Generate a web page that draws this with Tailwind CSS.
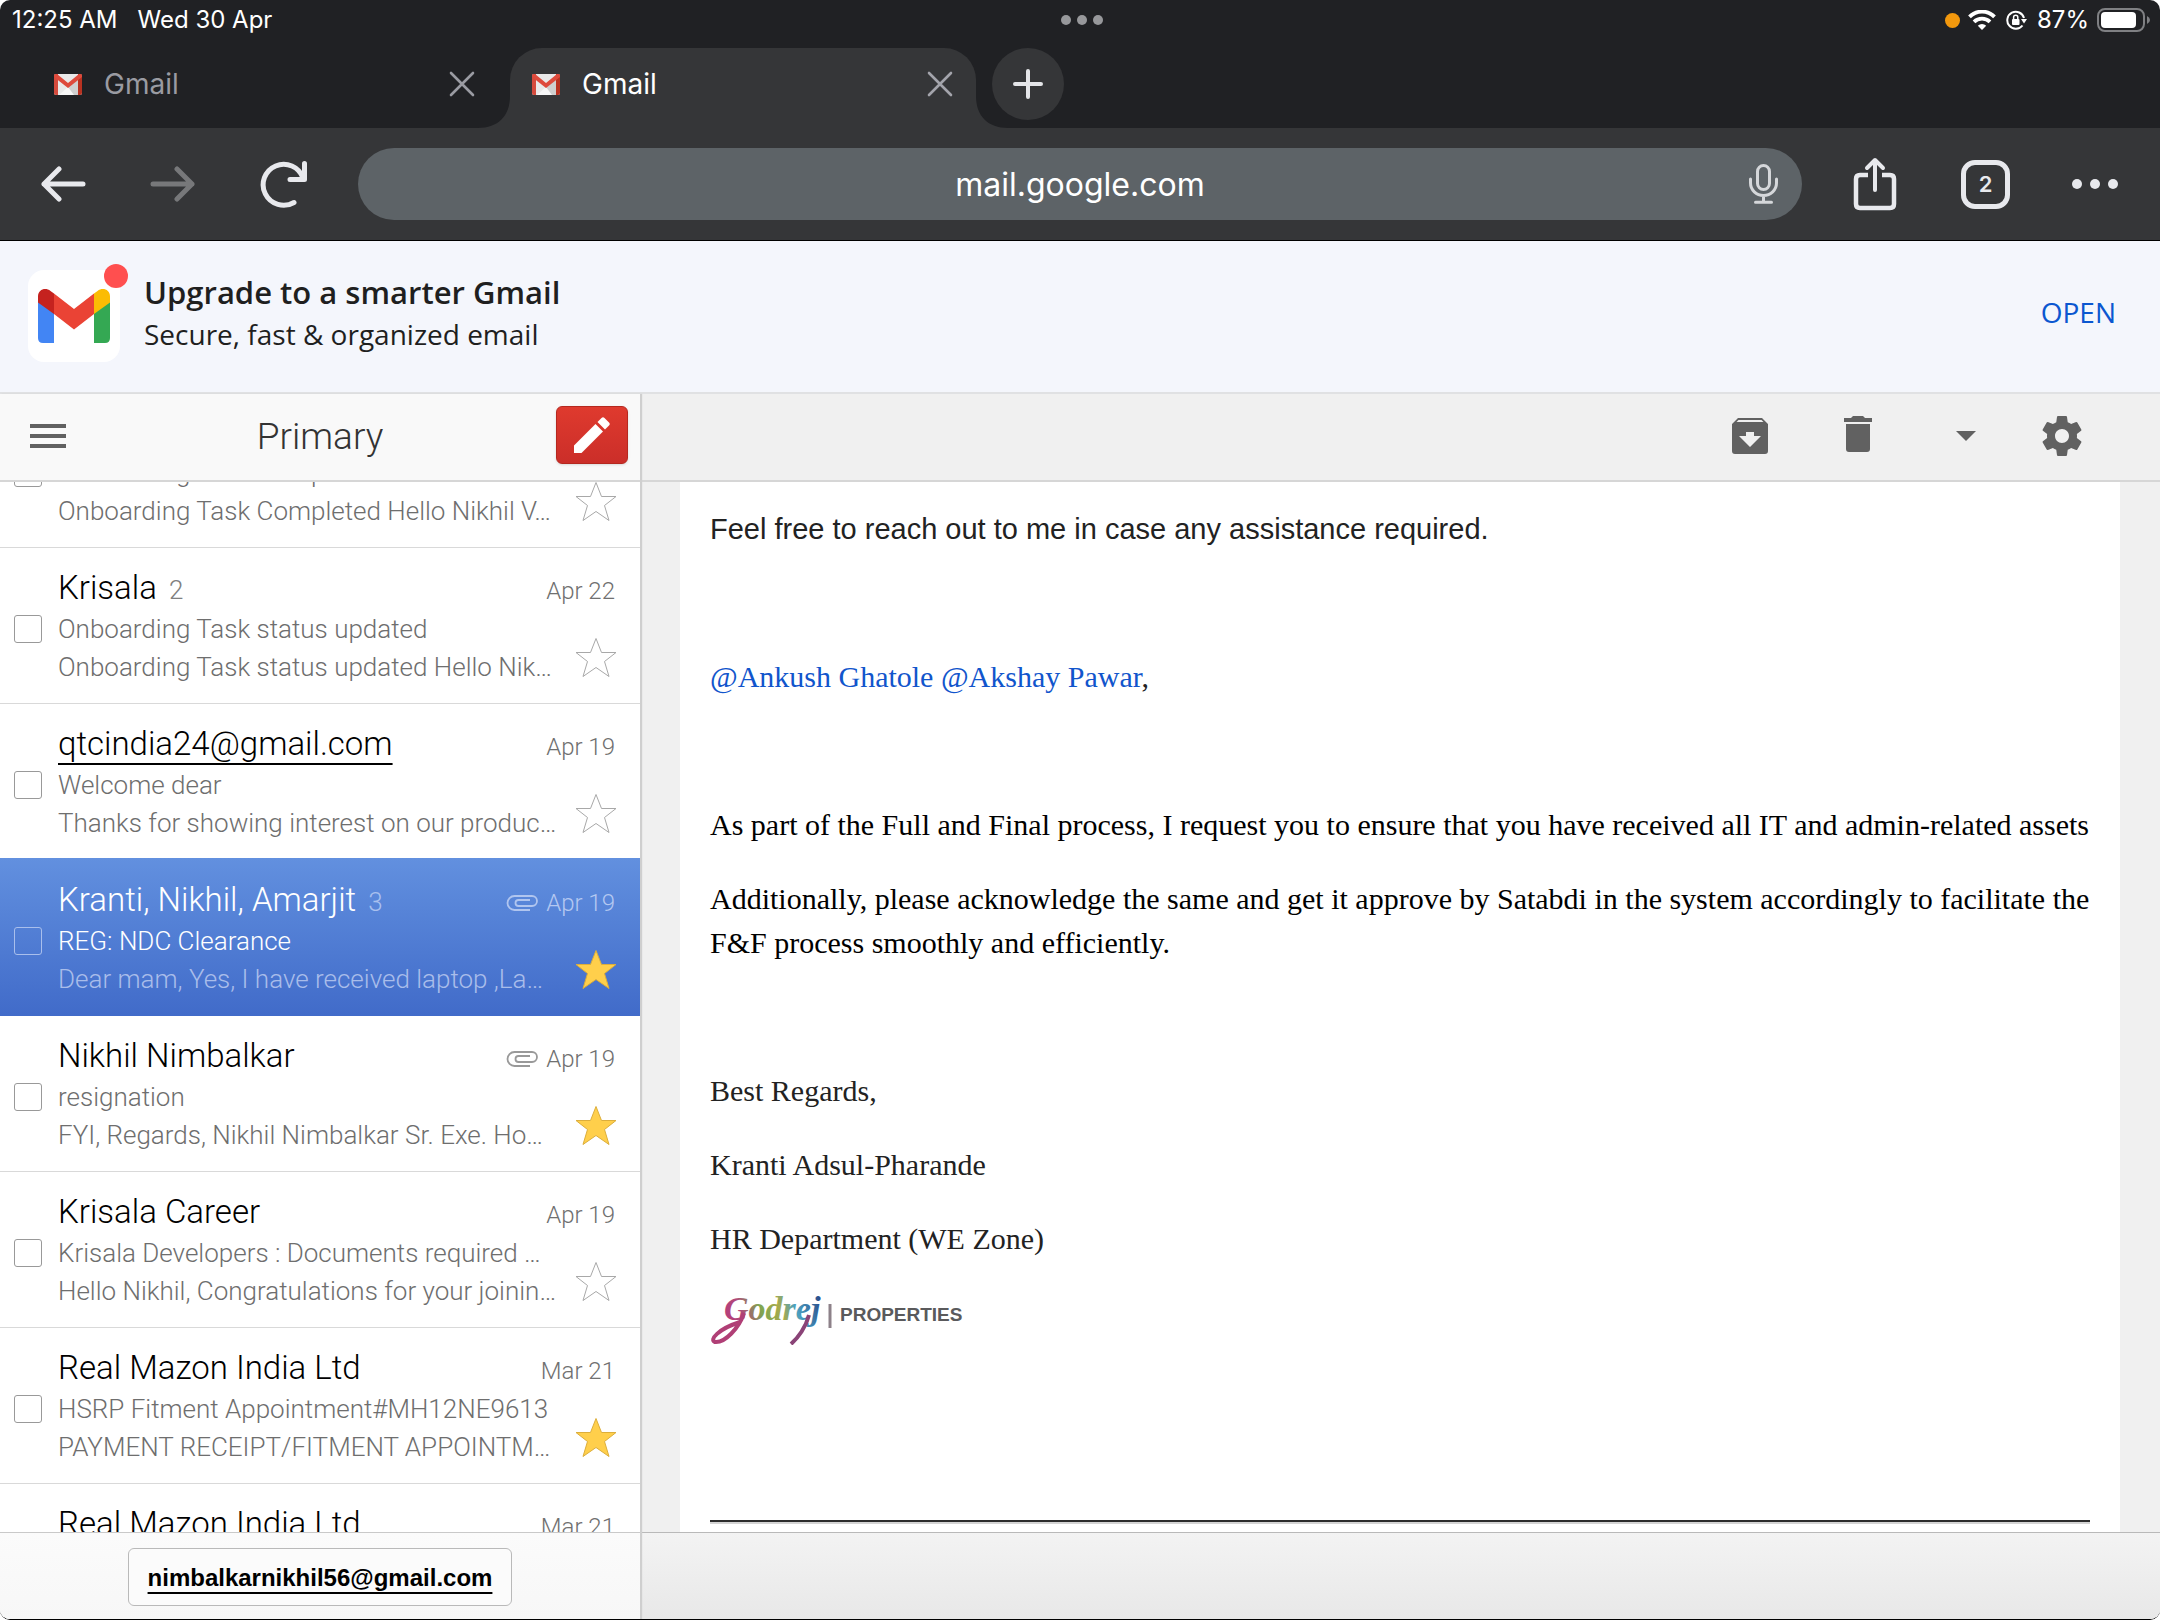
<!DOCTYPE html>
<html lang="en">
<head>
<meta charset="utf-8">
<meta name="viewport" content="width=device-width, initial-scale=1">
<title>Gmail</title>
<script src="https://cdn.jsdelivr.net/npm/@tailwindcss/browser@4"></script>
</head>
<body class="bg-white">
<svg class="hidden" aria-hidden="true">
  <defs>
    <symbol id="favicon" viewBox="0 0 28 21">
      <rect width="28" height="21" rx="2" fill="#e9e9e9"/>
      <path d="M5 21 14 13l9 8z" fill="#f7f7f7"/>
      <path d="M14 13 24 3v18h-4z" fill="#cfcfcf"/>
      <path d="M0 2Q0 0 2 0h2v21H2q-2 0-2-2z" fill="#d54b3d"/>
      <path d="M28 2q0-2-2-2h-2v21h2q2 0 2-2z" fill="#b93221"/>
      <path d="M0 2Q0 0 2 0h1l11 9L25 0h1q2 0 2 2v1L14 14 0 3z" fill="#de4a3c"/>
    </symbol>
    <symbol id="close" viewBox="0 0 26 26">
      <path d="M2 2l22 22M24 2 2 24" fill="none" stroke="currentColor" stroke-width="2.6" stroke-linecap="round"/>
    </symbol>
    <symbol id="flare" viewBox="0 0 32 32">
      <path d="M32 0v32H0C20 32 32 20 32 0z" fill="#353638"/>
    </symbol>
    <symbol id="clip" viewBox="0 0 32 16">
      <path d="M24 15H8.500a7 7 0 0 1 0-14H26a5 5 0 0 1 0 10H12.500a3 3 0 0 1 0-6H24" fill="none" stroke="currentColor" stroke-width="1.800"/>
    </symbol>
    <symbol id="star" viewBox="0 0 42 41">
      <path d="M21 1.500 26.500 15.500 41 15.500 29.500 24.500 34 39.500 21 30.500 8 39.500 12.500 24.500 1 15.500 15.500 15.500z" stroke-width="1" stroke-miterlimit="10"/>
    </symbol>
  </defs>
</svg>
<div class="flex h-screen flex-col overflow-hidden rounded-[10px] border-b border-black bg-white">

  <header class="shrink-0 border-b border-black bg-[#202124] font-[Inter,sans-serif] text-white">
    <div class="flex h-12 items-center pr-[9px] pb-4 pl-3 pt-2 text-[24px] leading-6">
      <div class="flex flex-1 gap-5"><span>12:25 AM</span><span>Wed 30 Apr</span></div>
      <div class="flex gap-[6px]" aria-hidden="true">
        <span class="size-[10px] rounded-full bg-[#97989b]"></span><span class="size-[10px] rounded-full bg-[#97989b]"></span><span class="size-[10px] rounded-full bg-[#97989b]"></span>
      </div>
      <div class="flex flex-1 items-center justify-end">
        <span class="mr-2 size-[15px] rounded-full bg-[#f2980d]"></span>
        <svg class="mr-[10px] h-5 w-7" viewBox="0 0 28 20" fill="none" stroke="#fff" stroke-width="3.800"><path d="M1.500 6.800a17.500 17.500 0 0 1 25 0"/><path d="M6 11.800a11.500 11.500 0 0 1 16 0"/><path d="M14 20 9.800 15.800a6 6 0 0 1 8.400 0z" fill="#fff" stroke="none"/></svg>
        <svg class="mr-[10px] size-[21px]" viewBox="0 0 21 21" fill="none" stroke="#fff" stroke-width="2"><path d="M16.500 15.500A8.500 8.500 0 1 1 18 8"/><path d="M15 9h6l-3 4.500z" fill="#fff" stroke="none"/><rect x="6" y="9" width="7.500" height="6" rx="1" fill="#fff" stroke="none"/><path d="M7.600 9.500V7.300a2.100 2.100 0 0 1 4.200 0v2.200" stroke-width="1.500"/></svg>
        <span class="mr-2">87%</span>
        <svg class="h-6 w-[54px]" viewBox="0 0 54 24"><rect x="1" y="1" width="46" height="22" rx="7" fill="none" stroke="#7f8083" stroke-width="2"/><rect x="4" y="4" width="35" height="16" rx="4" fill="#fff"/><path d="M50 8q3 1.500 3 4t-3 4z" fill="#7f8083"/></svg>
      </div>
    </div>

    <div class="flex h-20 text-[28px] leading-9" role="tablist">
      <div class="flex w-[510px] items-center pb-2 pl-[54px]">
        <svg class="h-[21px] w-7"><use href="#favicon"/></svg>
        <button role="tab" class="ml-[22px] flex-1 text-left text-[#9a9ba2]">Gmail</button>
        <button aria-label="Close tab" class="mr-[35px] text-[#9a9ba2]"><svg class="size-[26px]"><use href="#close"/></svg></button>
      </div>
      <div class="relative flex w-[466px] items-center rounded-t-[32px] bg-[#353638] pb-2 pl-[22px]">
        <svg class="absolute bottom-0 -left-8 size-8"><use href="#flare"/></svg>
        <svg class="absolute -right-8 bottom-0 size-8 -scale-x-100"><use href="#flare"/></svg>
        <svg class="h-[21px] w-7"><use href="#favicon"/></svg>
        <button role="tab" aria-selected="true" class="ml-[22px] flex-1 text-left">Gmail</button>
        <button aria-label="Close tab" class="mr-[23px] text-[#a3a4ab]"><svg class="size-[26px]"><use href="#close"/></svg></button>
      </div>
      <button aria-label="New tab" class="ml-4 flex size-[72px] items-center justify-center rounded-full bg-[#353638] text-[#e4e5e8]">
        <svg class="size-[30px]" viewBox="0 0 30 30"><path d="M15 2v26M2 15h26" stroke="currentColor" stroke-width="4" stroke-linecap="round"/></svg>
      </button>
    </div>

    <div class="flex h-28 items-center bg-[#353638] text-[#e8e9ed]">
      <button aria-label="Back" class="ml-10"><svg class="h-9 w-[46px]" viewBox="0 0 46 36" fill="none" stroke="currentColor" stroke-width="5" stroke-linecap="round" stroke-linejoin="round"><path d="M43 18H4M19 3 4 18l15 15"/></svg></button>
      <button aria-label="Forward" class="ml-16 text-[#77787a]"><svg class="h-9 w-[46px]" viewBox="0 0 46 36" fill="none" stroke="currentColor" stroke-width="5" stroke-linecap="round" stroke-linejoin="round"><path d="M3 18h39M27 3l15 15-15 15"/></svg></button>
      <button aria-label="Reload" class="ml-16"><svg class="h-12 w-[50px]" viewBox="0 0 50 48" fill="none" stroke="currentColor" stroke-width="5" stroke-linecap="round" stroke-linejoin="round"><path d="M34 42.500A20.500 20.500 0 1 1 43 18"/><path d="M44.500 3.500v16H30"/></svg></button>
      <div class="relative ml-12 flex-1">
        <input aria-label="Address" value="mail.google.com" class="block h-[72px] w-full rounded-full bg-[#5d6367] px-20 text-center text-[32px] text-white">
        <button aria-label="Voice search" class="absolute top-4 right-6 text-[#d5d7da]"><svg class="h-10 w-[29px]" viewBox="0 0 29 40" fill="none" stroke="currentColor" stroke-width="3" stroke-linecap="round"><rect x="8.500" y="1.500" width="12" height="24" rx="6"/><path d="M1.500 15v4a13 12.500 0 0 0 26 0v-4M14.500 31.500V38M6.500 38.300h16"/></svg></button>
      </div>
      <button aria-label="Share" class="ml-[51px]"><svg class="h-[54px] w-11" viewBox="0 0 44 54" fill="none" stroke="currentColor" stroke-width="4.500" stroke-linecap="round" stroke-linejoin="round"><path d="M15 18H7q-4 0-4 4v25q0 4 4 4h30q4 0 4-4V22q0-4-4-4h-8" stroke-linecap="butt"/><path d="M22 33V3M14 11l8-8 8 8" stroke-width="4"/></svg></button>
      <button aria-label="2 open tabs" class="ml-16 size-[49px] rounded-[14px] border-[5px] border-[#e8e9ed] text-[22px] leading-9 font-semibold">2</button>
      <button aria-label="More" class="mr-[42px] ml-[62px] flex gap-2"><span class="size-[10px] rounded-full bg-[#e8e9ed]"></span><span class="size-[10px] rounded-full bg-[#e8e9ed]"></span><span class="size-[10px] rounded-full bg-[#e8e9ed]"></span></button>
    </div>
  </header>

  <section class="flex h-[153px] shrink-0 items-center border-b-2 border-[#e0e1e3] bg-[#f4f6fc] pr-11 pb-[2px] pl-7 font-['Open_Sans',sans-serif] text-[#1f1f1f]">
    <div class="relative flex size-[92px] items-center justify-center rounded-2xl bg-white">
      <svg class="h-[54px] w-[72px]" viewBox="0 0 72 54">
        <path d="M0 12 16 24v30H5q-5 0-5-5z" fill="#4285f4"/>
        <path d="M72 12 56 24v30h11q5 0 5-5z" fill="#34a853"/>
        <path d="M16 25 0 13.500V7.500C0 .5 7.500-2 12.500 2L16 4.500z" fill="#c5221f"/>
        <path d="M56 25 72 13.500V7.500C72 .5 64.500-2 59.500 2L56 4.500z" fill="#fbbc04"/>
        <path d="M16 4.500 36 20 56 4.500V25L36 40.500 16 25z" fill="#ea4335"/>
      </svg>
      <span class="absolute -top-[6px] -right-2 size-6 rounded-full bg-[#ff4f4f]"></span>
    </div>
    <div class="ml-6 flex-1 pb-2">
      <h1 class="text-[31px] leading-[44px] font-semibold">Upgrade to a smarter Gmail</h1>
      <p class="text-[28px] leading-10">Secure, fast &amp; organized email</p>
    </div>
    <a href="#" class="pb-2 text-[28px] font-medium text-[#0b57d0]">OPEN</a>
  </section>

  <main class="flex min-h-0 flex-1 font-['Liberation_Sans',Arial,sans-serif]">
    <aside class="z-10 flex w-[640px] shrink-0 flex-col bg-white font-[Roboto,sans-serif] font-light shadow-[2px_0_1px_#cfcfcf]">
      <div class="flex h-22 shrink-0 items-center justify-between border-b-2 border-[#d6d6d6] bg-[#f9f9f9] pr-3 pb-[2px] pl-[30px]">
        <button aria-label="Menu" class="flex w-[54px] flex-col gap-[6px]"><span class="h-1 w-9 bg-[#616161]"></span><span class="h-1 w-9 bg-[#616161]"></span><span class="h-1 w-9 bg-[#616161]"></span></button>
        <h2 class="pt-[2px] text-[37px] text-[#333]">Primary</h2>
        <button aria-label="Compose" class="mb-[2px] flex h-[58px] w-[72px] items-center justify-center rounded-md border border-[#b5281f] bg-linear-to-b from-[#df3a2e] to-[#cb2e29] shadow-sm">
          <svg class="size-9" viewBox="0 0 36 36" fill="#fff"><path d="M0 28.500 21.500 7l7.500 7.500L7.500 36H0zM23.500 5 27.500 1q1.500-1.500 3 0l4.500 4.500q1.500 1.500 0 3L31 12.500z"/></svg>
        </button>
      </div>

      <ul class="min-h-0 flex-1 overflow-hidden">
        <li class="-mt-[90px] flex h-[156px] border-b border-[#d9d9d9] pr-[23px] pl-[14px]">
          <input type="checkbox" aria-label="Select Onboarding Task Completed" class="mt-[67px] size-7 appearance-none rounded-[3px] border border-[#999]">
          <div class="ml-4 flex flex-1 justify-between pt-[62px] text-[26px] leading-[38px] whitespace-nowrap text-[#6e6e6e]">
            <div class="w-0"><p>Onboarding Task Completed</p><p>Onboarding Task Completed Hello Nikhil V…</p></div>
            <button aria-label="Star" class="mt-[27px] h-[41px] w-[42px] fill-white stroke-[#a8a8a8]"><svg class="size-full"><use href="#star"/></svg></button>
          </div>
        </li>
        <li class="flex h-[156px] border-b border-[#d9d9d9] pr-[23px] pl-[14px]">
          <input type="checkbox" aria-label="Select Krisala" class="mt-[67px] size-7 appearance-none rounded-[3px] border border-[#999]">
          <div class="ml-4 flex-1 pt-5">
            <div class="flex h-[42px] items-baseline pr-[2px] leading-10"><a href="#" class="text-[33px] text-black">Krisala</a><span class="ml-3 text-[26px] text-[#808080]">2</span><time class="ml-auto text-[24px] text-[#707070]">Apr 22</time></div>
            <div class="flex justify-between text-[26px] leading-[38px] whitespace-nowrap text-[#6e6e6e]">
              <div class="w-0"><p>Onboarding Task status updated</p><p>Onboarding Task status updated Hello Nik…</p></div>
              <button aria-label="Star" class="mt-[27px] h-[41px] w-[42px] fill-white stroke-[#a8a8a8]"><svg class="size-full"><use href="#star"/></svg></button>
            </div>
          </div>
        </li>
        <li class="flex h-[156px] border-b border-[#d9d9d9] pr-[23px] pl-[14px]">
          <input type="checkbox" aria-label="Select qtcindia24@gmail.com" class="mt-[67px] size-7 appearance-none rounded-[3px] border border-[#999]">
          <div class="ml-4 flex-1 pt-5">
            <div class="flex h-[42px] items-baseline pr-[2px] leading-10"><a href="#" class="text-[33px] text-black underline decoration-2 underline-offset-8">qtcindia24@gmail.com</a><time class="ml-auto text-[24px] text-[#707070]">Apr 19</time></div>
            <div class="flex justify-between text-[26px] leading-[38px] whitespace-nowrap text-[#6e6e6e]">
              <div class="w-0"><p>Welcome dear</p><p>Thanks for showing interest on our produc…</p></div>
              <button aria-label="Star" class="mt-[27px] h-[41px] w-[42px] fill-white stroke-[#a8a8a8]"><svg class="size-full"><use href="#star"/></svg></button>
            </div>
          </div>
        </li>
        <li aria-current="true" class="-mt-[2px] flex h-[158px] bg-linear-to-b from-[#6290df] to-[#416bc9] pt-[2px] pr-[23px] pl-[14px]">
          <input type="checkbox" aria-label="Select Kranti, Nikhil, Amarjit" class="mt-[67px] size-7 appearance-none rounded-[3px] border border-[#a9bfec]">
          <div class="ml-4 flex-1 pt-5">
            <div class="flex h-[42px] items-baseline pr-[2px] leading-10"><a href="#" class="text-[33px] text-white">Kranti, Nikhil, Amarjit</a><span class="ml-3 text-[26px] text-[#a9c0ee]">3</span><svg class="mr-2 ml-auto h-4 w-8 text-[#b0c5ef]"><use href="#clip"/></svg><time class="text-[24px] text-[#b4c8f1]">Apr 19</time></div>
            <div class="flex justify-between text-[26px] leading-[38px] whitespace-nowrap text-[#a9bdea]">
              <div class="w-0"><p class="text-white">REG: NDC Clearance</p><p>Dear mam, Yes, I have received laptop ,La…</p></div>
              <button aria-label="Starred" class="mt-[27px] h-[41px] w-[42px] fill-[#ffcf4b] stroke-[#dcae3b]"><svg class="size-full"><use href="#star"/></svg></button>
            </div>
          </div>
        </li>
        <li class="flex h-[156px] border-b border-[#d9d9d9] pr-[23px] pl-[14px]">
          <input type="checkbox" aria-label="Select Nikhil Nimbalkar" class="mt-[67px] size-7 appearance-none rounded-[3px] border border-[#999]">
          <div class="ml-4 flex-1 pt-5">
            <div class="flex h-[42px] items-baseline pr-[2px] leading-10"><a href="#" class="text-[33px] text-black">Nikhil Nimbalkar</a><svg class="mr-2 ml-auto h-4 w-8 text-[#999]"><use href="#clip"/></svg><time class="text-[24px] text-[#707070]">Apr 19</time></div>
            <div class="flex justify-between text-[26px] leading-[38px] whitespace-nowrap text-[#6e6e6e]">
              <div class="w-0"><p>resignation</p><p>FYI, Regards, Nikhil Nimbalkar Sr. Exe. Ho…</p></div>
              <button aria-label="Starred" class="mt-[27px] h-[41px] w-[42px] fill-[#ffcf4b] stroke-[#dcae3b]"><svg class="size-full"><use href="#star"/></svg></button>
            </div>
          </div>
        </li>
        <li class="flex h-[156px] border-b border-[#d9d9d9] pr-[23px] pl-[14px]">
          <input type="checkbox" aria-label="Select Krisala Career" class="mt-[67px] size-7 appearance-none rounded-[3px] border border-[#999]">
          <div class="ml-4 flex-1 pt-5">
            <div class="flex h-[42px] items-baseline pr-[2px] leading-10"><a href="#" class="text-[33px] text-black">Krisala Career</a><time class="ml-auto text-[24px] text-[#707070]">Apr 19</time></div>
            <div class="flex justify-between text-[26px] leading-[38px] whitespace-nowrap text-[#6e6e6e]">
              <div class="w-0"><p>Krisala Developers : Documents required …</p><p>Hello Nikhil, Congratulations for your joinin…</p></div>
              <button aria-label="Star" class="mt-[27px] h-[41px] w-[42px] fill-white stroke-[#a8a8a8]"><svg class="size-full"><use href="#star"/></svg></button>
            </div>
          </div>
        </li>
        <li class="flex h-[156px] border-b border-[#d9d9d9] pr-[23px] pl-[14px]">
          <input type="checkbox" aria-label="Select Real Mazon India Ltd" class="mt-[67px] size-7 appearance-none rounded-[3px] border border-[#999]">
          <div class="ml-4 flex-1 pt-5">
            <div class="flex h-[42px] items-baseline pr-[2px] leading-10"><a href="#" class="text-[33px] text-black">Real Mazon India Ltd</a><time class="ml-auto text-[24px] text-[#707070]">Mar 21</time></div>
            <div class="flex justify-between text-[26px] leading-[38px] whitespace-nowrap text-[#6e6e6e]">
              <div class="w-0"><p>HSRP Fitment Appointment#MH12NE9613</p><p>PAYMENT RECEIPT/FITMENT APPOINTM…</p></div>
              <button aria-label="Starred" class="mt-[27px] h-[41px] w-[42px] fill-[#ffcf4b] stroke-[#dcae3b]"><svg class="size-full"><use href="#star"/></svg></button>
            </div>
          </div>
        </li>
        <li class="flex h-[156px] pr-[23px] pl-[58px]">
          <div class="flex-1 pt-5">
            <div class="flex h-[42px] items-baseline pr-[2px] leading-10"><a href="#" class="text-[33px] text-black">Real Mazon India Ltd</a><time class="ml-auto text-[24px] text-[#707070]">Mar 21</time></div>
          </div>
        </li>
      </ul>

      <footer class="flex h-[87px] shrink-0 justify-center border-t border-[#c9c9c9] bg-linear-to-b from-[#fbfbfb] to-[#f7f7f7] pt-[15px]">
        <button class="h-[58px] w-96 rounded-[6px] border border-[#b9b9b9] bg-[#fbfbfb] pt-[2px] font-['Liberation_Sans',Arial,sans-serif] text-[24px] font-bold text-black underline decoration-2 underline-offset-[6px]">nimbalkarnikhil56@gmail.com</button>
      </footer>
    </aside>

    <div class="flex min-w-0 flex-1 flex-col bg-[#f0f0f0]">
      <div class="flex h-22 shrink-0 items-center justify-end border-b-2 border-[#d6d6d6] pr-[78px] pb-[2px] text-[#616161]">
        <button aria-label="Archive"><svg class="size-9" viewBox="0 0 36 36" fill="currentColor"><path fill-rule="evenodd" d="M6 0h24l6 6v27q0 3-3 3H3q-3 0-3-3V6zM6.500 2 4.500 4h27l-2-2zM14 14v4H7l11 11 11-11h-7v-4z"/></svg></button>
        <button aria-label="Delete" class="mr-[84px] mb-1 ml-[76px]"><svg class="h-9 w-7" viewBox="0 0 28 36" fill="currentColor"><path d="M0 2h7l2-2h10l2 2h7v4H0zM2 8h24v25q0 3-3 3H5q-3 0-3-3z"/></svg></button>
        <button aria-label="More actions" class="mr-[66px]"><svg class="h-[10px] w-5" viewBox="0 0 20 10"><path d="M0 0h20L10 10z" fill="currentColor"/></svg></button>
        <button aria-label="Settings"><svg class="size-10" viewBox="2 2 20 20" fill="currentColor"><path d="M19.430 12.980c.04-.32.07-.64.07-.98s-.03-.66-.07-.98l2.110-1.650c.19-.15.24-.42.12-.64l-2-3.460c-.12-.22-.39-.3-.61-.22l-2.490 1c-.52-.4-1.080-.73-1.690-.98l-.38-2.650C14.460 2.180 14.250 2 14 2h-4c-.25 0-.46.18-.49.42l-.38 2.650c-.61.25-1.170.59-1.690.98l-2.490-1c-.23-.09-.49 0-.61.22l-2 3.460c-.13.22-.07.49.12.64l2.110 1.650c-.04.32-.07.65-.07.98s.03.66.07.98l-2.110 1.650c-.19.15-.24.42-.12.64l2 3.460c.12.22.39.3.61.22l2.490-1c.52.4 1.080.73 1.690.98l.38 2.650c.03.24.24.42.49.42h4c.25 0 .46-.18.49-.42l.38-2.650c.61-.25 1.170-.59 1.690-.98l2.490 1c.23.09.49 0 .61-.22l2-3.460c.12-.22.07-.49-.12-.64l-2.110-1.650zM12 15.500c-1.930 0-3.500-1.570-3.500-3.500s1.570-3.500 3.500-3.500 3.500 1.570 3.500 3.500-1.570 3.500-3.500 3.500z"/></svg></button>
      </div>

      <article class="mr-10 ml-10 flex min-h-0 flex-1 flex-col gap-[30px] overflow-hidden bg-white px-[30px] pt-[25px] font-['Liberation_Serif','Times_New_Roman',serif] text-[30px] leading-[44px] text-[#222]">
        <p class="font-['Liberation_Sans',Arial,sans-serif] text-[29px]">Feel free to reach out to me in case any assistance required.</p>
        <p class="mt-[74px]"><a href="#" class="text-[#1155cc]">@Ankush Ghatole</a> <a href="#" class="text-[#1155cc]">@Akshay Pawar</a>,</p>
        <p class="mt-[74px] whitespace-nowrap text-black">As part of the Full and Final process, I request you to ensure that you have received all IT and admin-related assets</p>
        <p class="text-black">Additionally, please acknowledge the same and get it approve by Satabdi in the system accordingly to facilitate the F&amp;F process smoothly and efficiently.</p>
        <p class="mt-[74px]">Best Regards,</p>
        <p>Kranti Adsul-Pharande</p>
        <p>HR Department (WE Zone)</p>
        <svg class="h-[54px] w-64 shrink-0" viewBox="0 0 256 54" role="img" aria-label="Godrej Properties">
          <defs>
            <linearGradient id="ink" gradientUnits="userSpaceOnUse" x1="14" y1="40" x2="108" y2="4"><stop offset="0" stop-color="#b83a78"/><stop offset=".22" stop-color="#b0487c"/><stop offset=".42" stop-color="#7fa650"/><stop offset=".6" stop-color="#a9ab4c"/><stop offset=".75" stop-color="#4b9fc0"/><stop offset="1" stop-color="#2b4f8c"/></linearGradient>
          </defs>
          <text x="14" y="29" font-family="Liberation Serif, serif" font-style="italic" font-weight="700" font-size="34" fill="url(#ink)">Godrej</text>
          <path d="M34 22C29 37 15 52 5 51-1 49 8 38 30 31" fill="none" stroke="#b03f76" stroke-width="4"/>
          <path d="M99 24C96 36 88 47 81 53" fill="none" stroke="#8a4377" stroke-width="4"/>
          <path d="M120 13v24" stroke="#8d8189" stroke-width="3"/>
          <text x="130" y="30" font-family="Liberation Sans, sans-serif" font-weight="700" font-size="19" fill="#5a5a5c">PROPERTIES</text>
        </svg>
        <hr class="mt-auto mb-2 border-t-2 border-b-2 border-t-[#2c2c2c] border-b-[#d4d4d4]">
      </article>

      <footer class="h-[87px] shrink-0 border-t border-[#b9b9b9] bg-linear-to-b from-[#f3f3f3] to-[#e8e8e8]"></footer>
    </div>
  </main>
</div>
</body>
</html>
